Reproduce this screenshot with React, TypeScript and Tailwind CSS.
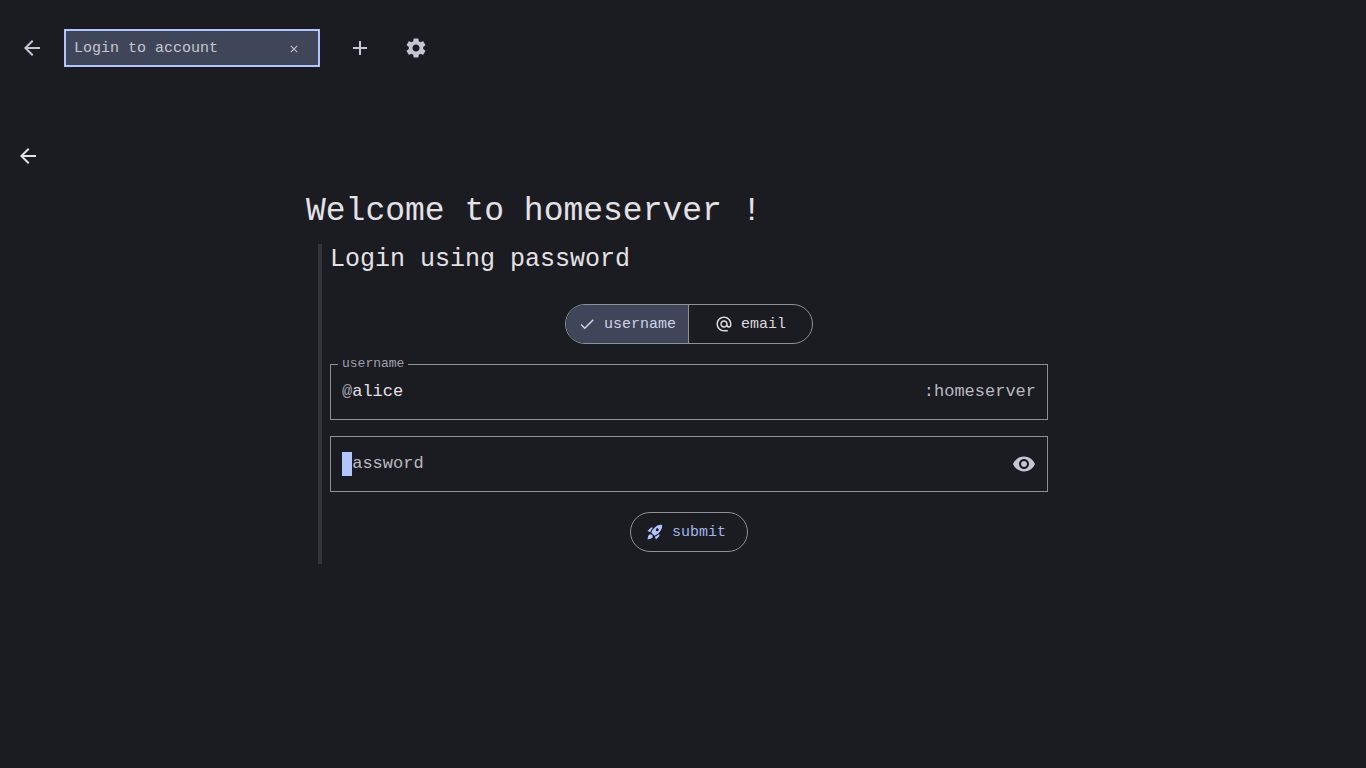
import React, { useState } from 'react';
import {
  MdAdd,
  MdAlternateEmail,
  MdArrowBack,
  MdCheck,
  MdClose,
  MdRocketLaunch,
  MdSettings,
  MdVisibility,
} from 'react-icons/md';

type IdentifierKind = 'username' | 'email';

interface IconButtonProps {
  label: string;
  className?: string;
  children: React.ReactNode;
}

const IconButton: React.FC<IconButtonProps> = ({ label, className = '', children }) => (
  <button type="button" aria-label={label} className={`flex items-center justify-center ${className}`}>
    {children}
  </button>
);

const TabBar: React.FC = () => (
  <header className="flex items-center h-24 px-3 text-[#c6c6d0]">
    <IconButton label="Back" className="size-10">
      <MdArrowBack className="size-6" />
    </IconButton>
    <div className="flex items-center justify-between w-64 ml-3 border-2 border-[#b2c5ff] bg-[#404659] py-[5px] pl-2 pr-3">
      <a href="#login" className="pt-0.5 text-[15px] leading-5">
        Login to account
      </a>
      <IconButton label="Close tab" className="size-6 pt-0.5">
        <MdClose className="size-3" />
      </IconButton>
    </div>
    <IconButton label="New tab" className="size-10 ml-5">
      <MdAdd className="size-6" />
    </IconButton>
    <IconButton label="Settings" className="size-10 ml-4">
      <MdSettings className="size-6" />
    </IconButton>
  </header>
);

const IdentifierToggle: React.FC = () => {
  const [kind, setKind] = useState<IdentifierKind>('username');

  const options = [
    { id: 'username' as const, icon: MdCheck },
    { id: 'email' as const, icon: MdAlternateEmail },
  ];

  return (
    <div className="flex w-62 h-10 overflow-hidden rounded-full border border-[#909099] divide-x divide-[#909099]">
      {options.map((opt) => (
        <button
          key={opt.id}
          type="button"
          aria-pressed={kind === opt.id}
          onClick={() => setKind(opt.id)}
          className={`flex w-1/2 items-center justify-center gap-2 text-[15px] ${
            kind === opt.id ? 'bg-[#404659] text-[#cdd3ea]' : 'text-[#dad8dd]'
          }`}
        >
          <opt.icon className="size-[18px]" />
          <span className="pt-0.5">{opt.id}</span>
        </button>
      ))}
    </div>
  );
};

const LoginForm: React.FC = () => {
  const [password, setPassword] = useState('');

  return (
    <form
      onSubmit={(e) => e.preventDefault()}
      className="flex flex-col items-center mx-3 mt-3 border-l-4 border-[#333438] pl-2 pb-3"
    >
      <h2 className="self-start text-[25px] leading-8 text-[#e4e1e6]">Login using password</h2>

      <div className="mt-7">
        <IdentifierToggle />
      </div>

      <fieldset className="w-full mt-3 border border-[#909099] px-[7px] text-[17px] text-[#b9b9c2]">
        <legend className="px-1 text-[13px] leading-4 text-[#a0a0aa]">
          <label htmlFor="username">username</label>
        </legend>
        <div className="flex items-center px-1 pt-1.5 pb-[13px] leading-7">
          <span className="text-[#a0a0aa]">@</span>
          <input
            id="username"
            type="text"
            defaultValue="alice"
            className="flex-1 min-w-0 bg-transparent text-[#e4e1e6] outline-none"
          />
          <span>:homeserver</span>
        </div>
      </fieldset>

      <div className="flex items-center w-full h-14 mt-4 border border-[#909099] px-[11px]">
        <div className="relative flex-1">
          <input
            type="password"
            aria-label="password"
            placeholder="password"
            value={password}
            onChange={(e) => setPassword(e.target.value)}
            className="w-full h-6 bg-transparent text-[17px] text-[#e4e1e6] placeholder:text-[#b9b9c2] caret-transparent outline-none"
          />
          {/* block cursor */}
          {password === '' && <span className="absolute left-0 top-0 w-[10px] h-6 bg-[#b2c5ff]" />}
        </div>
        <IconButton label="Show password" className="size-6 text-[#c6c6d0]">
          <MdVisibility className="size-6" />
        </IconButton>
      </div>

      <button
        type="submit"
        className="flex items-center gap-2 h-10 mt-5 rounded-full border border-[#909099] pl-[15px] pr-[21px] text-[15px] text-[#b2c5ff]"
      >
        <MdRocketLaunch className="size-[18px]" />
        <span className="pt-0.5 text-[#a3b5ea]">submit</span>
      </button>
    </form>
  );
};

export default function App() {
  return (
    <div className="min-h-screen bg-[#1b1c21] font-['Liberation_Mono',monospace]">
      <TabBar />
      <main>
        <div className="px-2 pt-10 text-[#e4e1e6]">
          <IconButton label="Previous step" className="size-10">
            <MdArrowBack className="size-6" />
          </IconButton>
        </div>
        <div className="max-w-[754px] mx-auto mt-4">
          <h1 className="text-[33px] leading-10 text-[#e4e1e6]">Welcome to homeserver !</h1>
          <LoginForm />
        </div>
      </main>
    </div>
  );
}
